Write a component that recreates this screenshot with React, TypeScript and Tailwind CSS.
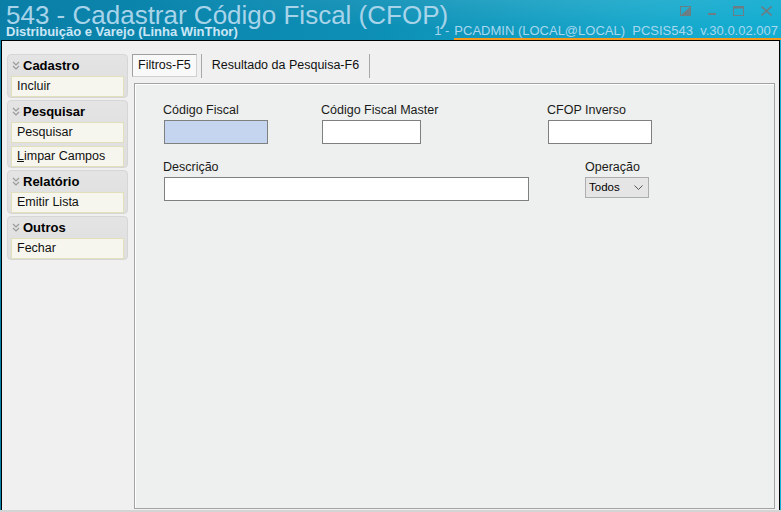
import React from "react";

const ui = { fontFamily: '"Liberation Sans", Arial, sans-serif' };

type Group = { title: string; items: { label: string; hot?: boolean }[] };

const groups: Group[] = [
  { title: "Cadastro", items: [{ label: "Incluir" }] },
  { title: "Pesquisar", items: [{ label: "Pesquisar" }, { label: "Limpar Campos", hot: true }] },
  { title: "Relatório", items: [{ label: "Emitir Lista" }] },
  { title: "Outros", items: [{ label: "Fechar" }] },
];

function Chevrons() {
  return (
    <svg width="8" height="9" viewBox="0 0 8 9" className="shrink-0">
      <path d="M1 1 L4 4 L7 1 M1 5 L4 8 L7 5" fill="none" stroke="#9a9a9a" strokeWidth="1.2" />
    </svg>
  );
}

function WindowButtons() {
  return (
    <div className="absolute top-[6px] right-[9px] flex items-center gap-[17px]">
      {/* pin / dock */}
      <svg width="11" height="10" viewBox="0 0 11 10">
        <rect x="0.5" y="0.5" width="10" height="9" fill="none" stroke="#6c7d84" />
        <path d="M1 9 L10 1 L10 9 Z" fill="#6c7d84" />
      </svg>
      {/* minimize */}
      <svg width="8" height="10" viewBox="0 0 8 10">
        <rect x="0" y="7" width="8" height="2" fill="#6c7d84" />
      </svg>
      {/* maximize */}
      <svg width="11" height="10" viewBox="0 0 11 10">
        <rect x="0.5" y="0.5" width="10" height="9" fill="none" stroke="#6c7d84" />
        <rect x="0.5" y="0.5" width="10" height="2" fill="#6c7d84" />
      </svg>
      {/* close */}
      <svg width="11" height="10" viewBox="0 0 11 10">
        <path d="M0.5 0.5 L10.5 9.5 M10.5 0.5 L0.5 9.5" stroke="#6c7d84" strokeWidth="1.6" />
      </svg>
    </div>
  );
}

function Field({ label, w, blue }: { label: string; w: string; blue?: boolean }) {
  return (
    <div className={`${w} flex flex-col`}>
      <span className="text-[12.5px] text-[#1a1a1a] leading-[14px] -ml-px whitespace-nowrap">{label}</span>
      <div className={`h-[24px] mt-[3px] border border-[#7f8180] ${blue ? "bg-[#c5d5ef]" : "bg-white"}`} />
    </div>
  );
}

export default function App() {
  return (
    <div
      className="relative w-[781px] h-[512px] overflow-hidden bg-[linear-gradient(100deg,#0a7ea6_0%,#0d90b6_45%,#16a8cb_75%,#12b2d6_100%)]"
      style={ui}
    >
      {/* title strip */}
      <div className="relative h-[40px] px-[6px] bg-[radial-gradient(ellipse_at_70%_-20%,rgba(255,255,255,0.12),transparent_55%)]">
        <div className="text-[26px] leading-[28px] text-[#a8d4ea] pt-[1px]">
          543 - Cadastrar Código Fiscal (CFOP)
        </div>
        <div className="absolute left-[6px] top-[25px] text-[13px] leading-[14px] font-bold text-[#cbe7f6]">
          Distribuição e Varejo (Linha WinThor)
        </div>
        <div className="absolute right-[3px] top-[24px] flex text-[13px] leading-[14px] text-[#a9d7ee]">
          <span className="pr-[5px]">1 -</span>
          <span className="border-b-2 border-[#f39a1e] -mr-[3px] pr-[3px] whitespace-pre">
            PCADMIN (LOCAL@LOCAL)  PCSIS543  v.30.0.02.007
          </span>
        </div>
        <WindowButtons />
      </div>

      {/* window body */}
      <div className="mx-[1px] h-[470px] border-x border-t border-black bg-[#f0f0f0] flex pt-[13px] pl-[5px]">
        {/* side actions */}
        <div className="w-[121px] flex flex-col gap-[2px]">
          {groups.map((g) => (
            <div
              key={g.title}
              className="rounded-[4px] border border-[#d6d6d6] bg-[linear-gradient(180deg,#e4e4e4,#dedede)] px-[3px]"
            >
              <div className="h-[21px] flex items-center gap-[3px] pl-[1px]">
                <Chevrons />
                <span className="text-[13px] font-bold text-black">{g.title}</span>
              </div>
              <div className="flex flex-col gap-[3px]">
                {g.items.map((it) => (
                  <div
                    key={it.label}
                    className="h-[21px] flex items-center pl-[5px] border border-[#e2dfbd] bg-[#f6f6ee] text-[12.5px] text-[#111]"
                  >
                    {it.hot ? (
                      <span>
                        <span className="underline">L</span>
                        {it.label.slice(1)}
                      </span>
                    ) : (
                      it.label
                    )}
                  </div>
                ))}
              </div>
            </div>
          ))}
        </div>

        {/* tabs + filter panel */}
        <div className="ml-[4px] flex-1 flex flex-col pr-[4px]">
          <div className="h-[29px] flex items-start text-[12.5px] text-[#111]">
            <div className="h-[23px] px-[5px] flex items-center border border-[#9f9f9f] border-r-[#d0d0d0] border-b-[#d0d0d0] bg-[#f9f9f9]">
              Filtros-F5
            </div>
            <div className="h-[24px] w-px bg-[#a8a8a8] ml-[4px]" />
            <div className="h-[23px] flex items-center px-[10px]">Resultado da Pesquisa-F6</div>
            <div className="h-[24px] w-px bg-[#a8a8a8]" />
          </div>
          <div className="flex-1 ml-[2px] mb-[1px] border border-[#a3a3a3] shadow-[inset_1px_1px_0_#ffffff] bg-[#eef0ef] pt-[19px] pl-[29px]">
            <div className="flex">
              <Field label="Código Fiscal" w="w-[104px]" blue />
              <div className="ml-[54px]">
                <Field label="Código Fiscal Master" w="w-[99px]" />
              </div>
              <div className="ml-[127px]">
                <Field label="CFOP Inverso" w="w-[104px]" />
              </div>
            </div>
            <div className="flex mt-[16px]">
              <Field label="Descrição" w="w-[365px]" />
              <div className="ml-[56px] flex flex-col">
                <span className="text-[12.5px] text-[#1a1a1a] leading-[14px]">Operação</span>
                <div className="mt-[3px] w-[64px] h-[21px] border border-[#adadad] bg-[#e5e5e5] flex items-center justify-between pl-[3px] pr-[5px] text-[11.5px] text-black">
                  <span>Todos</span>
                  <svg width="9" height="6" viewBox="0 0 9 6">
                    <path d="M0.5 0.5 L4.5 4.5 L8.5 0.5" fill="none" stroke="#555" />
                  </svg>
                </div>
              </div>
            </div>
          </div>
        </div>
      </div>
      <div className="h-[2px] bg-[#d4d4d4]" />
    </div>
  );
}
